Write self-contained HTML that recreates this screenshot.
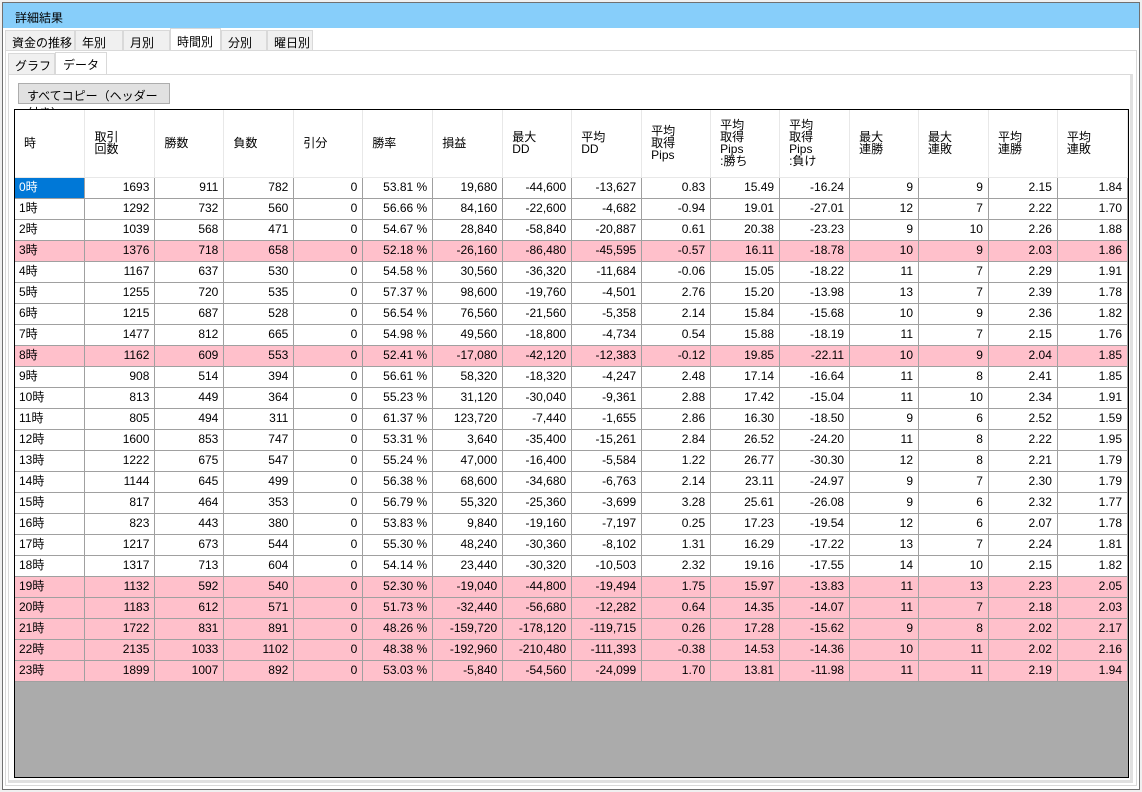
<!DOCTYPE html>
<html><head><meta charset="utf-8"><style>
*{margin:0;padding:0;box-sizing:border-box}
body{width:1142px;height:792px;background:#f0f0f0;font-family:"Liberation Sans","Noto Sans CJK JP",sans-serif;font-size:12px;color:#000;position:relative;overflow:hidden}
.win{position:absolute;left:2px;top:2px;width:1138px;height:788px;border:1px solid #707070;background:#fff}
.title{position:absolute;left:0;top:0;width:1136px;height:25px;background:#87cefa;padding:6px 0 0 12px;font-size:12px}
.tab{position:absolute;height:21px;background:#f0f0f0;border:1px solid #d9d9d9;padding:3px 0 0 6px;font-size:12px}
.sel{background:#fff;border-bottom:none}
.panel{position:absolute;border:1px solid #d9d9d9}
.btn{position:absolute;left:18px;top:83px;width:152px;height:21px;background:#e1e1e1;border:1px solid #adadad;font-size:12px;padding:3px 0 0 8px}
.grid{position:absolute;left:14px;top:109px;width:1115px;height:669px;border:1px solid #000;background:#ababab;overflow:hidden}
table{border-collapse:collapse;table-layout:fixed;position:absolute;left:0;top:0}
td{border:1px solid #a0a0a0;height:21px;padding:0 5px 0 4px;text-align:right;white-space:nowrap;background:#fff;font-size:12px;line-height:19px}
td:first-child{text-align:left;border-left:none}
th{border:1px solid #e8e8e8;border-top:none;height:67px;text-align:left;font-weight:normal;padding:0 0 0 9px;background:#fff;font-size:12px;line-height:12px;vertical-align:middle}
th:first-child{border-left:none}
tr.p td{background:#ffc0cb}
td.s{background:#0078d7;color:#fff}
</style></head><body>
<div class="win">
<div class="title">詳細結果</div>
</div>
<div class="tab" style="left:5px;top:30px;width:70px">資金の推移</div>
<div class="tab" style="left:75px;top:30px;width:48px">年別</div>
<div class="tab" style="left:123px;top:30px;width:47px">月別</div>
<div class="tab sel" style="left:170px;top:28px;width:51px;height:23px;padding-top:4px">時間別</div>
<div class="tab" style="left:221px;top:30px;width:46px">分別</div>
<div class="tab" style="left:267px;top:30px;width:46px">曜日別</div>
<div class="panel" style="left:5px;top:50px;width:1132px;height:736px"></div>
<div class="tab" style="left:8px;top:53px;width:47px;height:22px">グラフ</div>
<div class="tab sel" style="left:55px;top:52px;width:52px;height:23px;padding-left:7px">データ</div>
<div class="panel" style="left:8px;top:74px;width:1125px;height:709px;border-right:3px solid #e0e0e0;border-bottom:3px solid #e0e0e0"></div>
<div class="btn">すべてコピー（ヘッダー付き）</div>
<div class="grid">
<table>
<colgroup><col style="width:70px"><col style="width:70px"><col style="width:69px"><col style="width:70px"><col style="width:69px"><col style="width:70px"><col style="width:70px"><col style="width:69px"><col style="width:70px"><col style="width:69px"><col style="width:69px"><col style="width:70px"><col style="width:69px"><col style="width:70px"><col style="width:69px"><col style="width:70px"></colgroup>
<tr><th>時</th><th>取引<br>回数</th><th>勝数</th><th>負数</th><th>引分</th><th>勝率</th><th>損益</th><th>最大<br>DD</th><th>平均<br>DD</th><th>平均<br>取得<br>Pips</th><th>平均<br>取得<br>Pips<br>:勝ち</th><th>平均<br>取得<br>Pips<br>:負け</th><th>最大<br>連勝</th><th>最大<br>連敗</th><th>平均<br>連勝</th><th>平均<br>連敗</th></tr>
<tr><td class="s">0時</td><td>1693</td><td>911</td><td>782</td><td>0</td><td>53.81 %</td><td>19,680</td><td>-44,600</td><td>-13,627</td><td>0.83</td><td>15.49</td><td>-16.24</td><td>9</td><td>9</td><td>2.15</td><td>1.84</td></tr>
<tr><td>1時</td><td>1292</td><td>732</td><td>560</td><td>0</td><td>56.66 %</td><td>84,160</td><td>-22,600</td><td>-4,682</td><td>-0.94</td><td>19.01</td><td>-27.01</td><td>12</td><td>7</td><td>2.22</td><td>1.70</td></tr>
<tr><td>2時</td><td>1039</td><td>568</td><td>471</td><td>0</td><td>54.67 %</td><td>28,840</td><td>-58,840</td><td>-20,887</td><td>0.61</td><td>20.38</td><td>-23.23</td><td>9</td><td>10</td><td>2.26</td><td>1.88</td></tr>
<tr class="p"><td>3時</td><td>1376</td><td>718</td><td>658</td><td>0</td><td>52.18 %</td><td>-26,160</td><td>-86,480</td><td>-45,595</td><td>-0.57</td><td>16.11</td><td>-18.78</td><td>10</td><td>9</td><td>2.03</td><td>1.86</td></tr>
<tr><td>4時</td><td>1167</td><td>637</td><td>530</td><td>0</td><td>54.58 %</td><td>30,560</td><td>-36,320</td><td>-11,684</td><td>-0.06</td><td>15.05</td><td>-18.22</td><td>11</td><td>7</td><td>2.29</td><td>1.91</td></tr>
<tr><td>5時</td><td>1255</td><td>720</td><td>535</td><td>0</td><td>57.37 %</td><td>98,600</td><td>-19,760</td><td>-4,501</td><td>2.76</td><td>15.20</td><td>-13.98</td><td>13</td><td>7</td><td>2.39</td><td>1.78</td></tr>
<tr><td>6時</td><td>1215</td><td>687</td><td>528</td><td>0</td><td>56.54 %</td><td>76,560</td><td>-21,560</td><td>-5,358</td><td>2.14</td><td>15.84</td><td>-15.68</td><td>10</td><td>9</td><td>2.36</td><td>1.82</td></tr>
<tr><td>7時</td><td>1477</td><td>812</td><td>665</td><td>0</td><td>54.98 %</td><td>49,560</td><td>-18,800</td><td>-4,734</td><td>0.54</td><td>15.88</td><td>-18.19</td><td>11</td><td>7</td><td>2.15</td><td>1.76</td></tr>
<tr class="p"><td>8時</td><td>1162</td><td>609</td><td>553</td><td>0</td><td>52.41 %</td><td>-17,080</td><td>-42,120</td><td>-12,383</td><td>-0.12</td><td>19.85</td><td>-22.11</td><td>10</td><td>9</td><td>2.04</td><td>1.85</td></tr>
<tr><td>9時</td><td>908</td><td>514</td><td>394</td><td>0</td><td>56.61 %</td><td>58,320</td><td>-18,320</td><td>-4,247</td><td>2.48</td><td>17.14</td><td>-16.64</td><td>11</td><td>8</td><td>2.41</td><td>1.85</td></tr>
<tr><td>10時</td><td>813</td><td>449</td><td>364</td><td>0</td><td>55.23 %</td><td>31,120</td><td>-30,040</td><td>-9,361</td><td>2.88</td><td>17.42</td><td>-15.04</td><td>11</td><td>10</td><td>2.34</td><td>1.91</td></tr>
<tr><td>11時</td><td>805</td><td>494</td><td>311</td><td>0</td><td>61.37 %</td><td>123,720</td><td>-7,440</td><td>-1,655</td><td>2.86</td><td>16.30</td><td>-18.50</td><td>9</td><td>6</td><td>2.52</td><td>1.59</td></tr>
<tr><td>12時</td><td>1600</td><td>853</td><td>747</td><td>0</td><td>53.31 %</td><td>3,640</td><td>-35,400</td><td>-15,261</td><td>2.84</td><td>26.52</td><td>-24.20</td><td>11</td><td>8</td><td>2.22</td><td>1.95</td></tr>
<tr><td>13時</td><td>1222</td><td>675</td><td>547</td><td>0</td><td>55.24 %</td><td>47,000</td><td>-16,400</td><td>-5,584</td><td>1.22</td><td>26.77</td><td>-30.30</td><td>12</td><td>8</td><td>2.21</td><td>1.79</td></tr>
<tr><td>14時</td><td>1144</td><td>645</td><td>499</td><td>0</td><td>56.38 %</td><td>68,600</td><td>-34,680</td><td>-6,763</td><td>2.14</td><td>23.11</td><td>-24.97</td><td>9</td><td>7</td><td>2.30</td><td>1.79</td></tr>
<tr><td>15時</td><td>817</td><td>464</td><td>353</td><td>0</td><td>56.79 %</td><td>55,320</td><td>-25,360</td><td>-3,699</td><td>3.28</td><td>25.61</td><td>-26.08</td><td>9</td><td>6</td><td>2.32</td><td>1.77</td></tr>
<tr><td>16時</td><td>823</td><td>443</td><td>380</td><td>0</td><td>53.83 %</td><td>9,840</td><td>-19,160</td><td>-7,197</td><td>0.25</td><td>17.23</td><td>-19.54</td><td>12</td><td>6</td><td>2.07</td><td>1.78</td></tr>
<tr><td>17時</td><td>1217</td><td>673</td><td>544</td><td>0</td><td>55.30 %</td><td>48,240</td><td>-30,360</td><td>-8,102</td><td>1.31</td><td>16.29</td><td>-17.22</td><td>13</td><td>7</td><td>2.24</td><td>1.81</td></tr>
<tr><td>18時</td><td>1317</td><td>713</td><td>604</td><td>0</td><td>54.14 %</td><td>23,440</td><td>-30,320</td><td>-10,503</td><td>2.32</td><td>19.16</td><td>-17.55</td><td>14</td><td>10</td><td>2.15</td><td>1.82</td></tr>
<tr class="p"><td>19時</td><td>1132</td><td>592</td><td>540</td><td>0</td><td>52.30 %</td><td>-19,040</td><td>-44,800</td><td>-19,494</td><td>1.75</td><td>15.97</td><td>-13.83</td><td>11</td><td>13</td><td>2.23</td><td>2.05</td></tr>
<tr class="p"><td>20時</td><td>1183</td><td>612</td><td>571</td><td>0</td><td>51.73 %</td><td>-32,440</td><td>-56,680</td><td>-12,282</td><td>0.64</td><td>14.35</td><td>-14.07</td><td>11</td><td>7</td><td>2.18</td><td>2.03</td></tr>
<tr class="p"><td>21時</td><td>1722</td><td>831</td><td>891</td><td>0</td><td>48.26 %</td><td>-159,720</td><td>-178,120</td><td>-119,715</td><td>0.26</td><td>17.28</td><td>-15.62</td><td>9</td><td>8</td><td>2.02</td><td>2.17</td></tr>
<tr class="p"><td>22時</td><td>2135</td><td>1033</td><td>1102</td><td>0</td><td>48.38 %</td><td>-192,960</td><td>-210,480</td><td>-111,393</td><td>-0.38</td><td>14.53</td><td>-14.36</td><td>10</td><td>11</td><td>2.02</td><td>2.16</td></tr>
<tr class="p"><td>23時</td><td>1899</td><td>1007</td><td>892</td><td>0</td><td>53.03 %</td><td>-5,840</td><td>-54,560</td><td>-24,099</td><td>1.70</td><td>13.81</td><td>-11.98</td><td>11</td><td>11</td><td>2.19</td><td>1.94</td></tr>
</table>
</div>
</body></html>
